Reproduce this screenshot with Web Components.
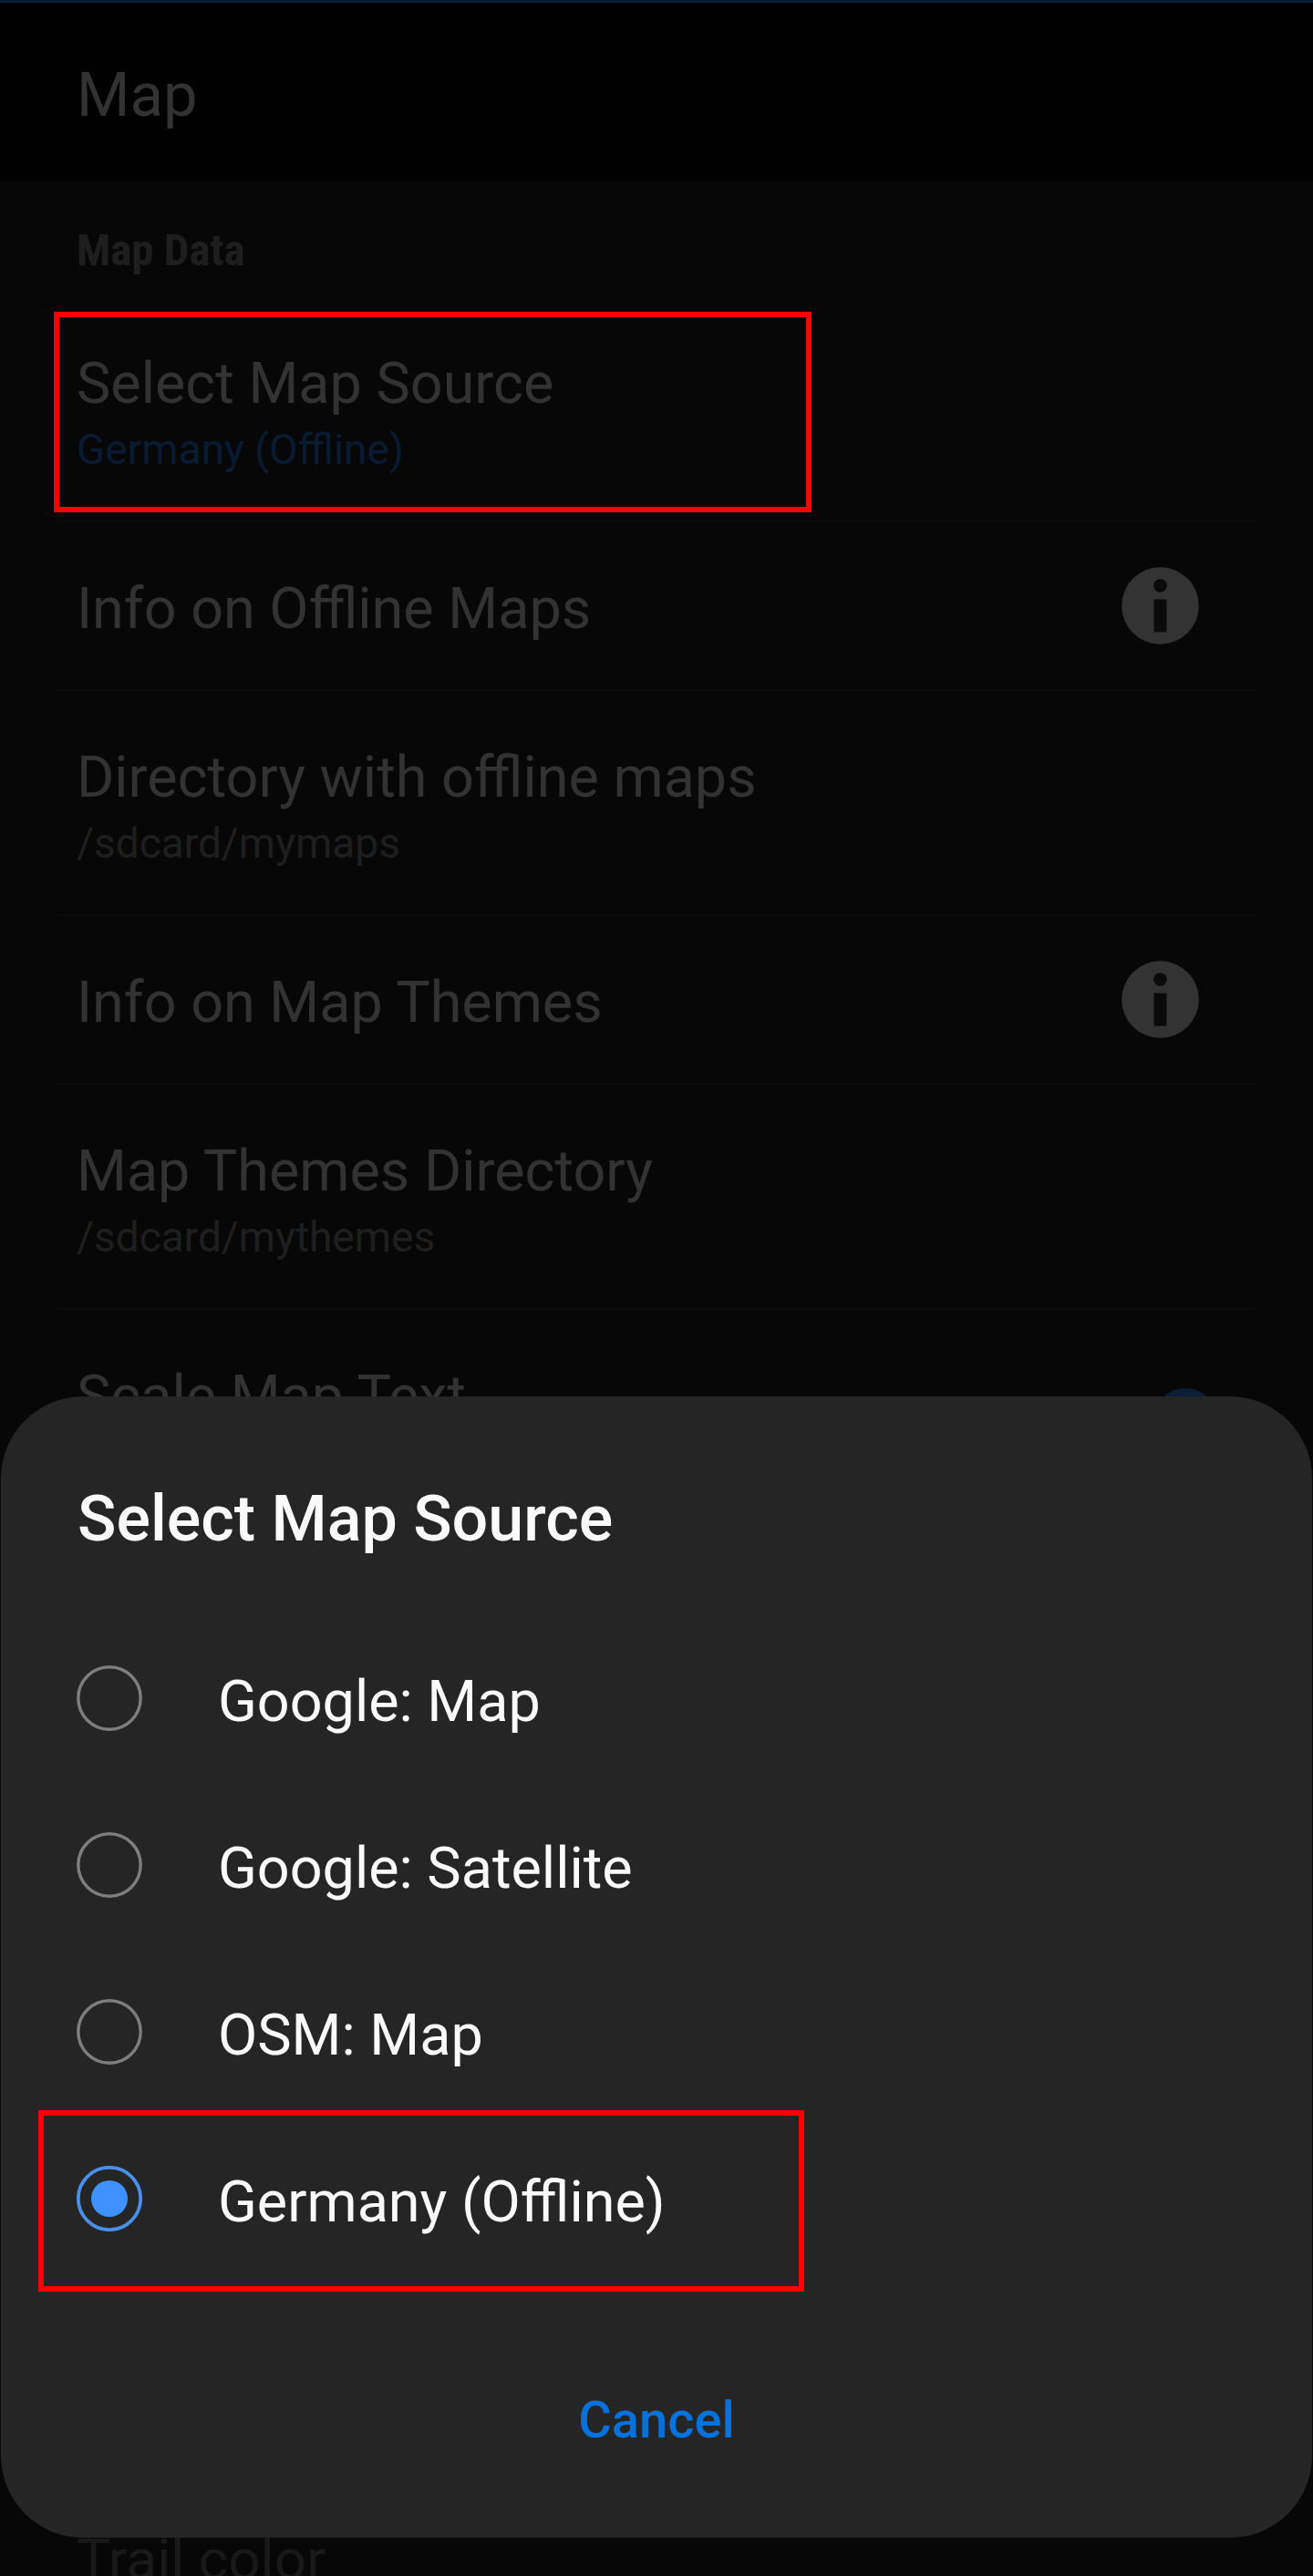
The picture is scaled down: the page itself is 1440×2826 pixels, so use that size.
<!DOCTYPE html>
<html lang="en">
<head>
<meta charset="utf-8">
<title>Map settings</title>
<style>
  html, body { margin: 0; background: #070707; }
  body { font-family: Roboto, "Noto Sans", sans-serif; }
</style>
</head>
<body>
<settings-screen>
  <app-bar slot="bar">Map</app-bar>
  <section-title>Map Data</section-title>
  <setting-row accent marked>Select Map Source<span slot="summary">Germany (Offline)</span></setting-row>
  <setting-row>Info on Offline Maps<info-icon slot="end"></info-icon></setting-row>
  <setting-row>Directory with offline maps<span slot="summary">/sdcard/mymaps</span></setting-row>
  <setting-row>Info on Map Themes<info-icon slot="end"></info-icon></setting-row>
  <setting-row>Map Themes Directory<span slot="summary">/sdcard/mythemes</span></setting-row>
  <setting-row class="tall">Scale Map Text<toggle-switch slot="end"></toggle-switch></setting-row>
  <setting-row disabled>Trail color</setting-row>
  <choice-sheet slot="dialog">
    <span slot="title">Select Map Source</span>
    <radio-option>Google: Map</radio-option>
    <radio-option>Google: Satellite</radio-option>
    <radio-option>OSM: Map</radio-option>
    <radio-option checked>Germany (Offline)</radio-option>
    <span slot="action">Cancel</span>
  </choice-sheet>
</settings-screen>
<script>
const define = (name, html) => customElements.define(name, class extends HTMLElement {
  constructor() {
    super();
    this.attachShadow({ mode: 'open' }).innerHTML = html;
  }
});

define('settings-screen', `
<style>
  :host { display: flex; flex-direction: column; position: relative; width: 1440px; height: 2826px; overflow: hidden; background: #070707; }
  main { display: flex; flex-direction: column; }
  ::slotted(.tall) { height: 1276px !important; }
</style>
<slot name="bar"></slot><main><slot></slot></main><slot name="dialog"></slot>`);

define('app-bar', `
<style>
  :host { display: block; box-sizing: border-box; height: 199px; flex: none; padding: 61px 84px 0; border-top: 3px solid #0a1c33; background: #000; color: #323232; font-size: 67px; line-height: 80px; }
</style><slot></slot>`);

define('section-title', `
<style>
  :host { display: block; box-sizing: border-box; height: 127px; flex: none; padding: 45px 84px 0; color: #1e1e1e; font: 700 49px/61px "Roboto Condensed", Roboto, sans-serif; font-stretch: 75%; }
</style><slot></slot>`);

define('setting-row', `
<style>
  :host { display: flex; box-sizing: border-box; position: relative; flex: none; margin: 0 63px; padding: 57px 0 0 21px; border-bottom: 2px solid #0c0c0c; color: #323232; }
  .text { display: flex; flex-direction: column; flex: 1; gap: 7px; padding-bottom: 51px; white-space: nowrap; }
  .title { font-size: 62.9px; line-height: 75px; }
  ::slotted([slot=summary]) { display: block; height: 55px; font-size: 46px; line-height: 56px; color: #1e1e1e; }
  :host([accent]) ::slotted([slot=summary]) { color: #0a1b31; }
  :host([disabled]) { color: #191919; }
  :host([disabled]) .title { font-size: 62px; }
  .mark { display: none; }
  :host([marked]) .mark { display: block; position: absolute; left: -4px; top: 16px; width: 819px; height: 208px; border: 6px solid #f00; }
  .end { flex: none; }
</style>
<div class="text"><div class="title"><slot></slot></div><slot name="summary"></slot></div>
<div class="end"><slot name="end"></slot></div>
<div class="mark"></div>`);

define('info-icon', `
<style>:host { display: block; width: 85px; height: 85px; margin: -8px 62px 0 0; } svg { display: block; }</style>
<svg width="85" height="85" viewBox="0 0 85 85"><circle cx="42.5" cy="42.5" r="42.3" fill="#333"/><circle cx="42.5" cy="20.5" r="7.3" fill="#0a0a0a"/><path d="M35.5 35.5h14v36h-14z" fill="#0a0a0a"/></svg>`);

define('toggle-switch', `
<style>:host { display: block; width: 74px; height: 74px; margin: 29px 40px 0 0; border-radius: 50%; background: #0c1d36; }</style>`);

define('choice-sheet', `
<style>
  :host { display: flex; flex-direction: column; box-sizing: border-box; position: absolute; left: 1px; top: 1532px; width: 1438px; height: 1252px; border-radius: 90px; background: #252525; color: #fafafa; }
  h2 { margin: 93px 0 0 84px; height: 146px; font-size: 70px; line-height: 82px; font-weight: 500; }
  .list { display: flex; flex-direction: column; }
  button { all: unset; align-self: center; margin-top: 119px; color: #0472dc; font-size: 56px; line-height: 66px; font-weight: 500; }
</style>
<h2><slot name="title"></slot></h2><div class="list"><slot></slot></div><button><slot name="action"></slot></button>`);

define('radio-option', `
<style>
  :host { display: flex; box-sizing: border-box; position: relative; align-items: center; height: 183px; padding-left: 83px; gap: 83px; font-size: 62.9px; line-height: 76px; }
  svg { display: block; flex: none; }
  .ring { fill: none; stroke: #7e7e7e; stroke-width: 3.4; }
  .dot { display: none; fill: #3e91ff; }
  :host([checked]) .ring { stroke: #4a90ea; stroke-width: 3.8; }
  :host([checked]) .dot { display: block; }
  .label { padding-top: 9px; }
  .mark { display: none; }
  :host([checked]) .mark { display: block; position: absolute; left: 41px; top: -5px; width: 828px; height: 187px; border: 6px solid #f00; }
</style>
<svg width="72" height="72" viewBox="0 0 72 72"><circle class="ring" cx="36" cy="36" r="34.2"/><circle class="dot" cx="36" cy="36" r="20"/></svg>
<div class="label"><slot></slot></div><div class="mark"></div>`);
</script>
</body>
</html>
